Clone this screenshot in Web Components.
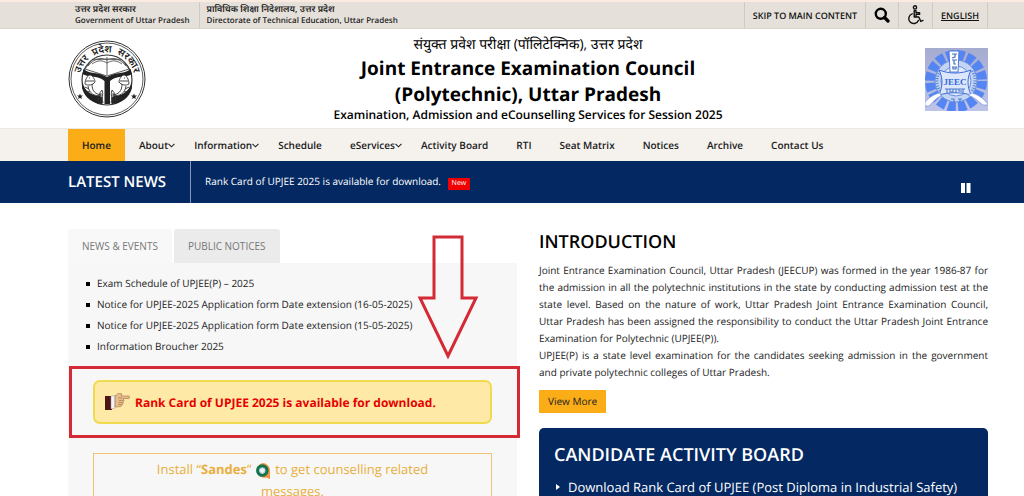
<!DOCTYPE html>
<html lang="en">
<head>
<meta charset="utf-8">
<meta name="viewport" content="width=device-width, initial-scale=1">
<title>Joint Entrance Examination Council, Uttar Pradesh</title>
<style>
  html, body {
    margin: 0;
    height: 100%;
  }
  body {
    --navy: #042962;
    --amber: #fbad18;
    --gutter-left: 68px;
    --gutter-right: 36px;
    font-family: "Open Sans", "Noto Sans", sans-serif;
    font-size: 10px;
    line-height: 17px;
    text-rendering: geometricPrecision;
    color: #222;
    background: #fff;
  }
</style>
</head>
<body>
<site-page>
  <top-bar slot="top"></top-bar>
  <site-header slot="top">
    <span slot="native">संयुक्त प्रवेश परीक्षा (पॉलिटेक्निक), उत्तर प्रदेश</span>
    <span slot="title">Joint Entrance Examination Council<br>(Polytechnic), Uttar Pradesh</span>
    <span slot="tagline">Examination, Admission and eCounselling Services for Session 2025</span>
  </site-header>
  <main-nav slot="top">
    <nav-item active>Home</nav-item>
    <nav-item menu>About</nav-item>
    <nav-item menu>Information</nav-item>
    <nav-item>Schedule</nav-item>
    <nav-item menu>eServices</nav-item>
    <nav-item>Activity Board</nav-item>
    <nav-item>RTI</nav-item>
    <nav-item>Seat Matrix</nav-item>
    <nav-item>Notices</nav-item>
    <nav-item>Archive</nav-item>
    <nav-item>Contact Us</nav-item>
  </main-nav>
  <news-ticker slot="top">Rank Card of UPJEE 2025 is available for download.</news-ticker>

  <news-panel slot="left">
    <news-link>Exam Schedule of UPJEE(P) – 2025</news-link>
    <news-link>Notice for UPJEE-2025 Application form Date extension (16-05-2025)</news-link>
    <news-link>Notice for UPJEE-2025 Application form Date extension (15-05-2025)</news-link>
    <news-link>Information Broucher 2025</news-link>
    <rank-notice slot="notice">Rank Card of UPJEE 2025 is available for download.</rank-notice>
    <sandes-box slot="notice"></sandes-box>
  </news-panel>

  <intro-section slot="right">
    <span slot="heading">INTRODUCTION</span>
    Joint Entrance Examination Council, Uttar Pradesh (JEECUP) was formed in the year 1986-87 for the admission in all the polytechnic institutions in the state by conducting admission test at the state level. Based on the nature of work, Uttar Pradesh Joint Entrance Examination Council, Uttar Pradesh has been assigned the responsibility to conduct the Uttar Pradesh Joint Entrance Examination&nbsp;for Polytechnic (UPJEE(P)).<br>
    UPJEE(P) is a state level examination for the candidates seeking admission in the government and private polytechnic colleges of Uttar Pradesh.
  </intro-section>
  <activity-board slot="right">
    <span slot="heading">CANDIDATE ACTIVITY BOARD</span>
    Download Rank Card of UPJEE (Post Diploma in Industrial Safety)
  </activity-board>
</site-page>

<script>
// Shared base: every component renders its markup once
class BaseElement extends HTMLElement {
  constructor() {
    super();
    this.attachShadow({ mode: 'open' });
  }

  connectedCallback() {
    this.shadowRoot.innerHTML = this.render();
  }
}

// Page shell
class SitePage extends BaseElement {
  render() {
    return `
      <style>
        :host {
          display: block;
          height: 100%;
          overflow: hidden auto;
          scrollbar-width: none;
        }
        main {
          display: grid;
          grid-template-columns: minmax(0, 1fr) minmax(0, 1fr);
          gap: 22px;
          padding: 26px var(--gutter-right) 24px var(--gutter-left);
        }
      </style>
      <slot name="top"></slot>
      <main>
        <div><slot name="left"></slot></div>
        <div><slot name="right"></slot></div>
      </main>
    `;
  }
}

// Government strip with accessibility links
class TopBar extends BaseElement {
  render() {
    return `
      <style>
        :host {
          display: flex;
          justify-content: space-between;
          padding: 0 var(--gutter-right) 0 var(--gutter-left);
          background: #e5e1da;
          border-top: 2px solid #fbeadf;
          border-bottom: 1px solid #d8d4cc;
          font-weight: 600;
        }
        .owners, .tools {
          display: flex;
          height: 26px;
        }
        .owners {
          font-size: 8px;
          line-height: 11px;
        }
        .owners div {
          padding: 1px 9px 1px 7px;
          white-space: nowrap;
        }
        .owners div + div {
          border-left: 1px solid #cfcbc3;
        }
        .owners span {
          display: block;
        }
        .owners [lang="hi"] {
          font-size: 9px;
          line-height: 12px;
        }
        .tools {
          font-size: 9px;
          border-right: 1px solid #cfcbc3;
        }
        a, button {
          display: flex;
          align-items: center;
          color: #111;
          padding: 0 8px;
          border: 0;
          border-left: 1px solid #cfcbc3;
          background: none;
          text-decoration: none;
        }
        .lang {
          text-decoration: underline;
        }
      </style>
      <div class="owners">
        <div><span lang="hi">उत्तर प्रदेश सरकार</span><span>Government of Uttar Pradesh</span></div>
        <div><span lang="hi">प्राविधिक शिक्षा निदेशालय, उत्तर प्रदेश</span><span>Directorate of Technical Education, Uttar Pradesh</span></div>
      </div>
      <div class="tools">
        <a href="#main">SKIP TO MAIN CONTENT</a>
        <button type="button" aria-label="Search">
          <svg width="16" height="16" viewBox="0 0 16 16" fill="none" stroke="#000">
            <circle cx="6.8" cy="6.8" r="5" stroke-width="2.4"/>
            <path d="M10.5 10.5L14 14" stroke-width="3.2" stroke-linecap="round"/>
          </svg>
        </button>
        <button type="button" aria-label="Accessibility options">
          <svg width="17" height="20" viewBox="0 0 17 20" fill="none" stroke="#111" stroke-width="1.4" stroke-linejoin="round" stroke-linecap="round">
            <circle cx="8" cy="2.4" r="1.6"/>
            <path d="M7.2 5.6v6.4h4.6l2 4.4 2.2-1M7.2 5.6h1.8v2.2h3.6v1.6H9V12"/>
            <path d="M5.2 8.8a5 5 0 1 0 6.2 6.6"/>
          </svg>
        </button>
        <a class="lang" href="#hi">ENGLISH</a>
      </div>
    `;
  }
}

// Round state seal: rings, bow, book and fish
class StateSeal extends BaseElement {
  render() {
    return `
      <style>
        :host { display: block; }
        svg { display: block; }
        text {
          font-size: 10px;
          font-weight: 600;
        }
      </style>
      <svg width="78" height="78" viewBox="0 0 78 78" role="img" aria-label="Uttar Pradesh state seal">
        <g fill="none" stroke="#333">
          <circle cx="39" cy="39" r="38" stroke-width="1"/>
          <circle cx="39" cy="39" r="36" stroke-width=".8"/>
          <circle cx="39" cy="40" r="25" stroke-width="1.2"/>
        </g>
        <path id="arc" d="M12 45A27.5 27.5 0 1 1 66 45" fill="none"/>
        <text fill="#222" text-anchor="middle"><textPath href="#arc" startOffset="50%">उत्तर &#160;प्रदेश&#160; सरकार</textPath></text>
        <path fill="#fff" stroke="#333" stroke-width=".8" d="M17 29l7-9 15-1 15 1 7 9-22 7z"/>
        <path fill="none" stroke="#444" stroke-width=".8" d="M20 26c7-8 12-9 19-6 7-3 12-2 19 6M39 17v18M24 24c6-4 10-4 15-1 5-3 9-3 15 1"/>
        <path fill="#222" d="M15.5 29c5 5 15 3 23.5 8 8.5-5 18.5-3 23.5-8l1.5 5c-6 4-16 1-22 7v23h-5.5V41c-6-6-15-3-22-7z"/>
        <g id="fish">
          <path fill="#222" d="M14.5 42c1 4 3 9 9 12 5 3 7 0 11 4v6c-9 0-18-6-20.5-16z"/>
          <path fill="#fff" stroke="#333" stroke-width=".9" d="M17 44c0-5 3-9 5-9s5 4 5 7c-2 3-7 4-10 2zM24 44c0 8 4 10 9 11-7 2-12-2-13-9"/>
          <path fill="none" stroke="#333" stroke-width=".9" d="M18 41h8M21 38h1M17 47l4 2M18 51l4 1M30 62c0-5 1-9 4-12 2 5-1 8 1 13M33 53v9"/>
        </g>
        <use href="#fish" transform="matrix(-1 0 0 1 78 0)"/>
        <path fill="#222" d="M12 53.5l.8 2 2.2.1-1.7 1.4.6 2.1-1.9-1.2-1.9 1.2.6-2.1-1.7-1.4 2.2-.1zM66 53.5l.8 2 2.2.1-1.7 1.4.6 2.1-1.9-1.2-1.9 1.2.6-2.1-1.7-1.4 2.2-.1z"/>
      </svg>
    `;
  }
}

// Square council logo: gear ring with plate and pen
class CouncilLogo extends BaseElement {
  render() {
    return `
      <style>
        :host { display: block; }
        svg { display: block; }
        text {
          font: 700 9px "Liberation Serif", serif;
        }
      </style>
      <svg width="63" height="63" viewBox="0 0 63 63" role="img" aria-label="JEEC logo">
        <defs>
          <linearGradient id="bg" x2="0" y2="1">
            <stop offset="0" stop-color="#a6abd0"/>
            <stop offset="1" stop-color="#bcc4ea"/>
          </linearGradient>
        </defs>
        <rect width="63" height="63" fill="url(#bg)"/>
        <circle cx="31" cy="33" r="26" fill="none" stroke="#5585f2" stroke-width="10" stroke-dasharray="7.8 2.4"/>
        <circle cx="31" cy="33" r="21" fill="#c3d4f5" stroke="#6c8fdc" stroke-width="1"/>
        <circle cx="31" cy="33" r="15" fill="#dfe9fb" stroke="#6c8fdc"/>
        <path fill="none" stroke="#557fd0" stroke-width="3" stroke-dasharray="1 1.5" d="M15 43a18 18 0 0 1 0-20M47 23a18 18 0 0 1 0 20"/>
        <path fill="#fff" stroke="#4c78d8" d="M24 3h10l-1 21h-8z"/>
        <path fill="none" stroke="#456fc8" stroke-width="1.2" d="M27 6h5M30 6v3l-3 1M27 12h5M29 12v4h2M27 19h5M28 19v2h3v-2"/>
        <path fill="#dce7fc" stroke="#3f70d6" d="M14 22c10 4 22 4 32 0-4 8-4 16 0 25-10-3-22-3-32 0 4-9 4-17 0-25z"/>
        <path fill="#fff" stroke="#7894d8" stroke-width=".7" d="M0 54c5-5 9-8 15-9l1 3C11 50 8 54 4 58H0zM63 56c-6-7-10-9-16-11l-4 2c6 2 10 6 15 10h5z"/>
        <text x="30" y="37" fill="#3268d8" text-anchor="middle">JEEC</text>
        <path fill="none" stroke="#4d78cd" stroke-width="1.1" d="M20 41h20M22 41v4M25 41v3h3v-3M31 41v4M34 41v2h3M38 41v4M26 51h3v3M33 51h4M35 51v3"/>
      </svg>
    `;
  }
}

// Masthead
class SiteHeader extends BaseElement {
  render() {
    return `
      <style>
        :host {
          display: flex;
          align-items: center;
          justify-content: space-between;
          padding: 6px var(--gutter-right) 5px var(--gutter-left);
          color: #000;
          text-align: center;
        }
        .side {
          display: flex;
          flex: 0 0 80px;
        }
        .side:last-child {
          justify-content: flex-end;
        }
        .native {
          font-size: 14px;
          line-height: 20px;
        }
        h1 {
          margin: 0;
          font-size: 19px;
          line-height: 26px;
          font-weight: 700;
        }
        .tagline {
          font-size: 12px;
          line-height: 16px;
          font-weight: 600;
        }
      </style>
      <div class="side"><state-seal></state-seal></div>
      <div>
        <div class="native" lang="hi"><slot name="native"></slot></div>
        <h1><slot name="title"></slot></h1>
        <div class="tagline"><slot name="tagline"></slot></div>
      </div>
      <div class="side"><council-logo></council-logo></div>
    `;
  }
}

// Navigation bar
class MainNav extends BaseElement {
  render() {
    return `
      <style>
        :host {
          display: block;
          background: #f5f2ee;
          border-top: 1px solid #ece8e4;
        }
        nav {
          display: flex;
          padding: 0 var(--gutter-right) 0 var(--gutter-left);
        }
      </style>
      <nav><slot></slot></nav>
    `;
  }
}

class NavItem extends BaseElement {
  render() {
    const chevron = this.hasAttribute('menu')
      ? `<svg width="7" height="5" viewBox="0 0 7 5" fill="none" stroke="#222" stroke-width="1.1"><path d="M.5 .8l3 3 3-3"/></svg>`
      : '';
    return `
      <style>
        :host {
          display: block;
        }
        :host([active]) {
          background: var(--amber);
        }
        a {
          display: flex;
          align-items: center;
          height: 32px;
          padding: 0 14px;
          font-weight: 600;
          color: #1a1a1a;
          text-decoration: none;
          white-space: nowrap;
        }
        :host([menu]) a {
          padding-right: 5px;
        }
      </style>
      <a href="#"><slot></slot>${chevron}</a>
    `;
  }
}

// Latest news strip
class NewsTicker extends BaseElement {
  render() {
    return `
      <style>
        :host {
          display: flex;
          height: 42px;
          padding: 0 var(--gutter-right) 0 var(--gutter-left);
          background: var(--navy);
          color: #fff;
        }
        h2 {
          margin: 0;
          padding-right: 24px;
          border-right: 1px solid #8797b5;
          font-size: 15px;
          line-height: 42px;
          font-weight: 600;
        }
        p {
          flex: 1;
          margin: 0;
          padding-left: 14px;
          line-height: 40px;
        }
        .badge {
          display: inline-block;
          margin-left: 4px;
          padding: 0 4px;
          background: #f00000;
          font-size: 7px;
          line-height: 12px;
        }
        button {
          align-self: flex-end;
          display: flex;
          padding: 0;
          margin: 0 17px 10px 0;
          border: 0;
          background: none;
        }
      </style>
      <h2>LATEST NEWS</h2>
      <p><slot></slot> <span class="badge">New</span></p>
      <button type="button" aria-label="Pause">
        <svg width="10" height="10" viewBox="0 0 10 10" fill="#fff"><path d="M0 0h4v10H0zM5.500 0h4v10h-4z"/></svg>
      </button>
    `;
  }
}

// Tabbed news box
class NewsPanel extends BaseElement {
  render() {
    return `
      <style>
        :host {
          display: block;
          position: relative;
        }
        .tabs {
          display: flex;
          gap: 2px;
        }
        button {
          height: 34px;
          padding: 0 14px;
          border: 0;
          border-radius: 3px 3px 0 0;
          background: #ebebeb;
          color: #777;
          font: inherit;
        }
        button[aria-selected="true"] {
          background: #f8f8f8;
        }
        .body {
          padding: 10px 25px 24px;
          background: #f7f7f7;
        }
        ul {
          margin: 0 0 23px;
          padding: 0;
        }
        .arrow {
          position: absolute;
          top: 5px;
          right: 38px;
        }
      </style>
      <div class="tabs" role="tablist">
        <button type="button" role="tab" aria-selected="true">NEWS &amp; EVENTS</button>
        <button type="button" role="tab" aria-selected="false">PUBLIC NOTICES</button>
      </div>
      <div class="body">
        <ul><slot></slot></ul>
        <slot name="notice"></slot>
      </div>
      <svg class="arrow" width="62" height="126" viewBox="0 0 62 126" fill="none" stroke="#d42a35" stroke-width="3">
        <path d="M17 3h28v61h14L31 122 3 64h14z"/>
      </svg>
    `;
  }
}

class NewsLink extends BaseElement {
  render() {
    return `
      <style>
        :host {
          display: list-item;
          list-style: none;
        }
        a {
          display: flex;
          align-items: center;
          gap: 7px;
          padding: 2px 0;
          margin-left: -7px;
          line-height: 17px;
          color: #222;
          text-decoration: none;
        }
        a::before {
          content: "";
          width: 4px;
          height: 4px;
          background: #000;
        }
      </style>
      <a href="#"><slot></slot></a>
    `;
  }
}

// Highlighted notice inside a red frame
class RankNotice extends BaseElement {
  render() {
    return `
      <style>
        :host {
          display: block;
          position: relative;
          margin-bottom: 29px;
        }
        a {
          display: flex;
          align-items: center;
          gap: 5px;
          height: 40px;
          padding: 0 10px;
          border: 2px solid #f0db50;
          border-radius: 7px;
          background: #ffe9a6;
          color: #e60000;
          font-size: 12px;
          font-weight: 700;
          text-decoration: none;
        }
        .frame {
          position: absolute;
          inset: -14px -28px -14px -24px;
          border: 3px solid #d42a35;
          pointer-events: none;
        }
      </style>
      <a href="#">
        <svg width="25" height="18" viewBox="0 0 25 18">
          <path d="M0 3h7v14H0z" fill="#4f1414"/>
          <path d="M6 3l4-.5V15l-4 1z" fill="#f4f4f4" stroke="#999" stroke-width=".5"/>
          <path d="M10 3l4-3 3 1-1 2h8l.8 1-.8 1.5h-6l1 2-.8 2-.6 2-1.6 2L10 14z" fill="#e8bd8a" stroke="#9a7048" stroke-width=".6"/>
          <path d="M13 5h4M14 7.5h4M13.5 9.5h4M13 11.5h4" stroke="#9a7048" stroke-width=".6"/>
        </svg>
        <slot></slot>
      </a>
      <div class="frame"></div>
    `;
  }
}

class SandesBox extends BaseElement {
  render() {
    return `
      <style>
        :host {
          display: block;
          padding: 4px 40px 12px;
          border: 1px solid #f0c274;
          color: #e9ae3c;
          font-size: 13px;
          line-height: 22px;
          text-align: center;
        }
        svg {
          margin-right: 2px;
          vertical-align: -5px;
        }
      </style>
      Install “<b>Sandes</b>”
      <svg width="15" height="16" viewBox="0 0 16 17">
        <path d="M8 0a8 8 0 0 1 8 8v9l-4-1.5A8 8 0 1 1 8 0z" fill="#f0953e"/>
        <circle cx="7.8" cy="8" r="5" fill="#fff" stroke="#16734f" stroke-width="3.4"/>
        <circle cx="7.8" cy="8" r="2.8" fill="#eef6fc" stroke="#6fa4cc" stroke-width=".5"/>
      </svg>
      to get counselling related messages.
    `;
  }
}

// Introduction text
class IntroSection extends BaseElement {
  render() {
    return `
      <style>
        :host {
          display: block;
        }
        h2 {
          margin: 0 0 7px;
          font-size: 18px;
          line-height: 26px;
          font-weight: 600;
          color: #000;
        }
        p {
          margin: 0;
          text-align: justify;
        }
        a {
          display: inline-block;
          margin: 9px 0 15px;
          padding: 3px 9px;
          background: var(--amber);
          color: #222;
          text-decoration: none;
        }
      </style>
      <h2><slot name="heading"></slot></h2>
      <p><slot></slot></p>
      <a href="#">View More</a>
    `;
  }
}

// Candidate links
class ActivityBoard extends BaseElement {
  render() {
    return `
      <style>
        :host {
          display: block;
          padding: 14px 15px 24px;
          border-radius: 5px;
          background: var(--navy);
          color: #fff;
        }
        h2 {
          margin: 0 0 9px;
          font-size: 18px;
          line-height: 26px;
          font-weight: 600;
        }
        a {
          display: flex;
          align-items: center;
          gap: 8px;
          padding-left: 2px;
          color: #fff;
          font-size: 13px;
          line-height: 20px;
          text-decoration: none;
        }
      </style>
      <h2><slot name="heading"></slot></h2>
      <a href="#">
        <svg width="4" height="6" viewBox="0 0 4 6" fill="#fff"><path d="M0 0l4 3-4 3z"/></svg>
        <span><slot></slot></span>
      </a>
    `;
  }
}

// Define custom elements
customElements.define('site-page', SitePage);
customElements.define('top-bar', TopBar);
customElements.define('state-seal', StateSeal);
customElements.define('council-logo', CouncilLogo);
customElements.define('site-header', SiteHeader);
customElements.define('main-nav', MainNav);
customElements.define('nav-item', NavItem);
customElements.define('news-ticker', NewsTicker);
customElements.define('news-panel', NewsPanel);
customElements.define('news-link', NewsLink);
customElements.define('rank-notice', RankNotice);
customElements.define('sandes-box', SandesBox);
customElements.define('intro-section', IntroSection);
customElements.define('activity-board', ActivityBoard);
</script>
</body>
</html>
